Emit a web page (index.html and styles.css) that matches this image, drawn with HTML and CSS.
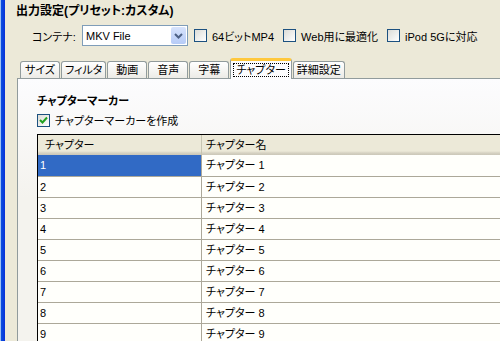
FILE: index.html
```html
<!DOCTYPE html>
<html>
<head>
    <link rel="stylesheet" href="styles.css">
</head>
<body>
    <div class="window">
        <div class="edge"></div>
        <div class="main">
            <div class="title">出力設定(プリセット:カスタム)</div>
            <div class="options">
                <span class="label">コンテナ:</span>
                <div class="select">
                    <span class="select-text">MKV File</span>
                    <span class="select-btn">
                        <svg width="9" height="6" viewBox="0 0 9 6"><path d="M1 1 L4.5 4.5 L8 1" fill="none" stroke="#4d6185" stroke-width="2"/></svg>
                    </span>
                </div>
                <label class="check"><span class="box"></span>64ビットMP4</label>
                <label class="check"><span class="box"></span>Web用に最適化</label>
                <label class="check"><span class="box"></span>iPod 5Gに対応</label>
            </div>
            <div class="tabs">
                <div class="tab">サイズ</div>
                <div class="tab">フィルタ</div>
                <div class="tab">動画</div>
                <div class="tab">音声</div>
                <div class="tab">字幕</div>
                <div class="tab active"><span class="focus">チャプター</span></div>
                <div class="tab">詳細設定</div>
            </div>
            <div class="panel">
                <div class="heading">チャプターマーカー</div>
                <label class="check marker">
                    <span class="box">
                        <svg width="9" height="9" viewBox="0 0 9 9"><path d="M1 4 L3.5 6.5 L8 1.5" fill="none" stroke="#21a121" stroke-width="2"/></svg>
                    </span>チャプターマーカーを作成
                </label>
                <div class="list">
                    <div class="list-head">
                        <div class="col1">チャプター</div>
                        <div class="col2">チャプター名</div>
                    </div>
                    <div class="row selected"><div class="col1">1</div><div class="col2">チャプター 1</div></div>
                    <div class="row"><div class="col1">2</div><div class="col2">チャプター 2</div></div>
                    <div class="row"><div class="col1">3</div><div class="col2">チャプター 3</div></div>
                    <div class="row"><div class="col1">4</div><div class="col2">チャプター 4</div></div>
                    <div class="row"><div class="col1">5</div><div class="col2">チャプター 5</div></div>
                    <div class="row"><div class="col1">6</div><div class="col2">チャプター 6</div></div>
                    <div class="row"><div class="col1">7</div><div class="col2">チャプター 7</div></div>
                    <div class="row"><div class="col1">8</div><div class="col2">チャプター 8</div></div>
                    <div class="row"><div class="col1">9</div><div class="col2">チャプター 9</div></div>
                </div>
            </div>
        </div>
    </div>
</body>
</html>
```

FILE: styles.css
```css
body {
    margin: 0;
    background: #ece9d8;
    font-family: "Liberation Sans", "Noto Sans CJK JP", sans-serif;
    font-size: 11px;
    font-feature-settings: "palt";
    color: #000;
    overflow: hidden;
}

.window {
    display: flex;
    height: 341px;
    overflow: hidden;
}

.edge {
    width: 5px;
    flex: none;
    background: linear-gradient(to right, #9cc0f5 0, #9cc0f5 1px, #0a4fe0 1px, #0831d9 5px);
}

.main {
    flex: 1;
    display: flex;
    flex-direction: column;
    padding-left: 11px;
    min-width: 0;
}

.title {
    font-weight: bold;
    font-size: 12px;
    line-height: 16px;
    margin-top: 3px;
    white-space: nowrap;
}

.options {
    display: flex;
    align-items: center;
    height: 21px;
    margin-top: 6px;
    padding-left: 16px;
    white-space: nowrap;
}

.label {
    width: 50px;
    flex: none;
}

.select {
    display: flex;
    align-items: center;
    flex: none;
    width: 104px;
    height: 19px;
    border: 1px solid #7f9db9;
    background: #fff;
    margin-right: 6px;
}

.select-text {
    flex: 1;
    padding-left: 3px;
}

.select-btn {
    width: 15px;
    height: 17px;
    margin-right: 1px;
    display: flex;
    align-items: center;
    justify-content: center;
    background: linear-gradient(#d7e3fc, #b6cbf7);
    border-radius: 2px;
}

.check {
    display: flex;
    align-items: center;
    flex: none;
    margin-right: 9px;
    white-space: nowrap;
}

.box {
    width: 11px;
    height: 11px;
    flex: none;
    border: 1px solid #1c5180;
    background: linear-gradient(135deg, #dcdcd7, #fff);
    margin-right: 5px;
    display: flex;
    align-items: center;
    justify-content: center;
}

.tabs {
    display: flex;
    align-items: flex-end;
    height: 20px;
    margin-top: 12px;
    padding-left: 4px;
    white-space: nowrap;
}

.tab {
    height: 17px;
    line-height: 17px;
    min-width: 40px;
    box-sizing: border-box;
    text-align: center;
    padding: 0 3px;
    border: 1px solid #919b9c;
    border-bottom: none;
    border-radius: 3px 3px 0 0;
    background: linear-gradient(#fff, #ecebe6);
    margin-right: 1px;
}

.tab.active {
    height: 21px;
    line-height: 18px;
    padding: 0 2px;
    background: #fcfcfe;
    border-top: 3px solid #ffc83c;
    margin-bottom: -1px;
    position: relative;
}

.focus {
    border: 1px dotted #000;
    padding: 0 2px;
}

.panel {
    flex: 1;
    margin-left: 1px;
    border-left: 1px solid #919b9c;
    border-top: 1px solid #919b9c;
    background: linear-gradient(#fcfcfe, #f4f3ee 120px);
    padding: 14px 0 0 19px;
    overflow: hidden;
}

.heading {
    font-weight: bold;
    line-height: 16px;
}

.marker {
    margin-top: 3px;
    height: 16px;
}

.list {
    margin-top: 6px;
    border-top: 1px solid #000;
    border-left: 1px solid #000;
    background: #fffffb;
}

.list-head {
    display: flex;
    height: 20px;
    line-height: 20px;
    background: linear-gradient(#ece9d8 16px, #d6d2c2 18px, #cbc7b8);
}

.list-head .col1 {
    width: 164px;
    flex: none;
    padding-left: 7px;
    box-sizing: border-box;
    border-right: 1px solid #c7c5b2;
}

.list-head .col2 {
    padding-left: 4px;
}

.row {
    display: flex;
    height: 20px;
    line-height: 20px;
    border-bottom: 1px solid #aca899;
}

.row.selected {
    height: 21px;
}

.row .col1 {
    width: 164px;
    flex: none;
    padding-left: 2px;
    box-sizing: border-box;
    border-right: 1px solid #aca899;
}

.row .col2 {
    padding-left: 4px;
}

.row.selected .col1 {
    background: #316ac5;
    color: #fff;
}
```
